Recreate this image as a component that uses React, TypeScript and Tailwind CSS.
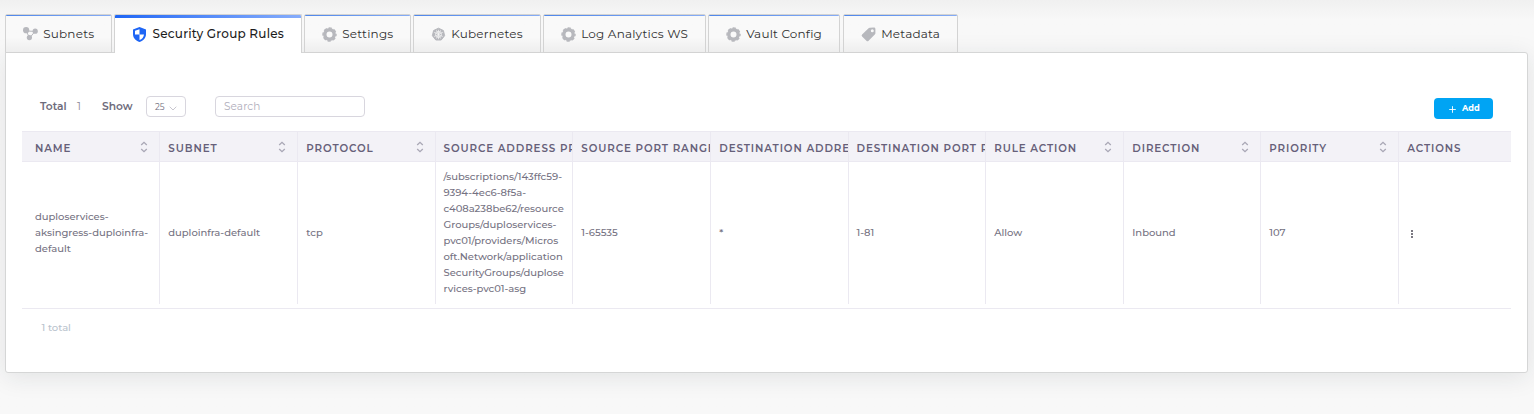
import React from "react";

type IconProps = { className?: string };

const NodesIcon = ({ className }: IconProps) => (
  <svg viewBox="0 0 15 15" className={className} fill="currentColor" stroke="currentColor">
    <path d="M3.2 4 12 4.4 6.6 11Z" fill="none" strokeWidth="1" />
    <circle cx="3.1" cy="3.2" r="3.1" stroke="none" />
    <circle cx="12.2" cy="4.200" r="2.600" stroke="none" />
    <circle cx="6.400" cy="10.600" r="2.600" stroke="none" />
  </svg>
);

const ShieldIcon = ({ className }: IconProps) => (
  <svg viewBox="0 0 15 15" className={className}>
    <path d="M7.5 0 14 2.4V7c0 3.9-2.700 6.900-6.500 8C3.700 13.900 1 10.900 1 7V2.400Z" fill="currentColor" />
    <path d="M7.500 2.200V7.400H3V3.800ZM7.500 7.400H12C11.800 10.100 10 12 7.500 12.900Z" fill="#fff" />
  </svg>
);

const GearIcon = ({ className }: IconProps) => (
  <svg viewBox="0 0 15 15" className={className} fill="none" stroke="currentColor">
    <circle cx="7.5" cy="7.500" r="4.700" strokeWidth="3.400" />
    <circle cx="7.5" cy="7.500" r="6.500" strokeWidth="1.400" strokeDasharray="3.300 1.805" strokeDashoffset="1.650" />
  </svg>
);

const KubernetesIcon = ({ className }: IconProps) => (
  <svg viewBox="0 0 15 15" className={className}>
    <path d="M7.500 1.200 12.400 3.500 13.600 8.700 10.200 13H4.800L1.400 8.700 2.600 3.500Z" fill="currentColor" stroke="currentColor" strokeLinejoin="round" />
    <g fill="none" stroke="#f7f7f7" strokeWidth=".7">
      <circle cx="7.500" cy="7.400" r="3" />
      <path d="M7.500 2.800v9.400M3.200 5.300l8.600 4.200M11.800 5.300 3.200 9.500M5.400 11.500l4.200-8.200M9.600 11.500 5.400 3.300" />
    </g>
  </svg>
);

const TagIcon = ({ className }: IconProps) => (
  <svg viewBox="0 0 15 15" className={className}>
    <path fillRule="evenodd" fill="currentColor" d="M8.700.8 13 .6Q14.400.6 14.400 2V6.200Q14.400 7 13.800 7.600L7.600 13.800Q6.500 14.800 5.400 13.800L1.100 9.500Q.1 8.400 1.100 7.400L7.300 1.400Q8 .8 8.700.8ZM11.300 2.300a1.500 1.500 0 1 0 0 3 1.500 1.500 0 0 0 0-3Z" />
  </svg>
);

const tabs = [
  { label: "Subnets", Icon: NodesIcon, width: "w-[107px]" },
  { label: "Security Group Rules", Icon: ShieldIcon, width: "w-[188px]", active: true },
  { label: "Settings", Icon: GearIcon, width: "w-[107px]" },
  { label: "Kubernetes", Icon: KubernetesIcon, width: "w-[128px]" },
  { label: "Log Analytics WS", Icon: GearIcon, width: "w-[163px]" },
  { label: "Vault Config", Icon: GearIcon, width: "w-[132px]" },
  { label: "Metadata", Icon: TagIcon, width: "w-[115px]" },
];

const columns = [
  { title: "NAME", sortable: true, lines: ["duploservices-", "aksingress-duploinfra-", "default"] },
  { title: "SUBNET", sortable: true, lines: ["duploinfra-default"] },
  { title: "PROTOCOL", sortable: true, lines: ["tcp"] },
  {
    title: "SOURCE ADDRESS PREFIX",
    lines: [
      "/subscriptions/143ffc59-",
      "9394-4ec6-8f5a-",
      "c408a238be62/resource",
      "Groups/duploservices-",
      "pvc01/providers/Micros",
      "oft.Network/application",
      "SecurityGroups/duplose",
      "rvices-pvc01-asg",
    ],
  },
  { title: "SOURCE PORT RANGE", lines: ["1-65535"] },
  { title: "DESTINATION ADDRESS PREFIX", lines: ["*"] },
  { title: "DESTINATION PORT RANGE", lines: ["1-81"] },
  { title: "RULE ACTION", sortable: true, lines: ["Allow"] },
  { title: "DIRECTION", sortable: true, lines: ["Inbound"] },
  { title: "PRIORITY", sortable: true, lines: ["107"] },
  { title: "ACTIONS", lines: [] },
];

const GRID = "grid grid-cols-[138px_138px_138px_137px_138px_138px_137px_138px_137px_138px_1fr]";

const SortIcon = () => (
  <svg viewBox="0 0 8 12" className="mb-[4px] h-3 w-2 shrink-0" fill="none" stroke="#a9a7b5" strokeWidth="1.300">
    <path d="M1.200 4 4 1.300 6.800 4M1.200 8 4 10.700 6.800 8" />
  </svg>
);

export default function App() {
  return (
    <div className="h-[414px] w-[1534px] overflow-hidden bg-[#f8f8f8] bg-linear-to-b from-[#f0f0f0] to-[#f8f8f8] to-[20px] px-[5px] pt-[14px] font-['Montserrat','Inter',sans-serif]">
      <nav className="relative z-10 -mb-px flex h-[39px]">
        {tabs.map(({ label, Icon, width, active }, i) => (
          <button
            key={label}
            className={`${width} ${i === 5 ? "mr-[3px]" : "mr-[2px]"} flex shrink-0 flex-col overflow-hidden rounded-t-[2px] border-x border-t border-[#d3d3d3] ${
              active ? "bg-white" : "border-b bg-linear-to-b from-[#f9f9f9] from-60% to-[#eeeeee]"
            }`}
          >
            <span
              className={`w-full shrink-0 bg-linear-to-r ${
                active ? "h-[3px] from-[#1f66f5] to-[#86acfb]" : "h-px from-[#4f87ea] to-[#86acf5]"
              }`}
            />
            <span className={`flex w-full items-center pl-[17px] ${active ? "h-[33px]" : "h-[36px]"}`}>
              <Icon className={`h-[15px] w-[15px] shrink-0 ${active ? "text-[#1f66f5]" : "text-[#b7b8bd]"}`} />
              <span
                className={`text-[12px] leading-4 whitespace-nowrap ${
                  active
                    ? "ml-[5.500px] pb-px font-medium tracking-[0.220px] text-[#1c1c1c]"
                    : "ml-[5.200px] tracking-[0.200px] text-[#303030]"
                }`}
              >
                {label}
              </span>
            </span>
          </button>
        ))}
      </nav>

      <main className="h-[321px] w-[1523px] rounded-b-[3px] rounded-tr-[3px] border border-[#d5d6d6] bg-white px-4 shadow-[0_4px_24px_rgba(34,41,47,0.1)]">
        <div className="flex h-[78px] items-start pt-[43px] pr-[18px] pl-[18px] text-[11px] text-[#6e6b7b]">
          <span className="mt-[3px] w-[37px] text-[10.700px] leading-4 font-semibold">Total</span>
          <span className="mt-[2px] w-[25px] leading-4 text-[#8b8895]">1</span>
          <span className="mt-[3px] w-[44px] text-[10.700px] leading-4 font-semibold">Show</span>
          <div className="flex h-[21px] w-[40px] items-center justify-between rounded-[4px] border border-[#d8d6de] pt-px pr-2 pl-2 text-[8.500px]">
            25
            <svg viewBox="0 0 8 5" className="mt-[2px] h-[5px] w-[8px]" fill="none" stroke="#c8c6cf">
              <path d="M.7.7 4 4 7.300.7" />
            </svg>
          </div>
          <input
            placeholder="Search"
            className="ml-[29px] h-[21px] w-[150px] rounded-[4px] border border-[#d8d6de] px-2 pb-px text-[10.500px] tracking-[0.100px] placeholder:text-[#b0aebb]"
          />
          <button className="mt-[2px] ml-auto flex h-[21px] w-[59px] items-center rounded-[4px] bg-[#00a4f4] pl-[15px] text-[8.200px] font-bold text-white">
            <svg viewBox="0 0 7 7" className="mt-[2px] mr-[6px] h-[7px] w-[7px]" stroke="currentColor" strokeWidth=".9">
              <path d="M3.500.2v6.600M.2 3.500h6.600" />
            </svg>
            <span className="pb-px">Add</span>
          </button>
        </div>

        <div className={`${GRID} h-[31px] border-y border-[#ebe9f1] bg-[#f3f2f7]`}>
          {columns.map(({ title, sortable }, i) => (
            <div
              key={title}
              className={`flex min-w-0 items-center justify-between overflow-hidden pt-[4px] text-[10.300px] font-semibold tracking-[0.900px] text-[#666079] ${
                i === 0 ? "pl-[13px]" : i === 3 || i === 6 ? "pl-[7.500px]" : "pl-[8.300px]"
              } ${i < 10 ? "border-r border-[#ebe9f1]" : ""} ${sortable ? "pr-[11px]" : ""}`}
            >
              <span className="leading-4 whitespace-nowrap">{title}</span>
              {sortable && <SortIcon />}
            </div>
          ))}
        </div>

        <div className={`${GRID} h-[147px] border-b border-[#ebe9f1] pb-1`}>
          {columns.map(({ title, lines }, i) => (
            <div
              key={title}
              className={`flex flex-col justify-center overflow-hidden text-[10px] leading-4 font-medium tracking-[-0.030px] text-[#757282] ${
                i === 0 ? "pl-[13px]" : i === 3 || i === 6 ? "pl-[7.500px]" : "pl-[8.300px]"
              } ${i < 10 ? "border-r border-[#ebe9f1]" : ""}`}
            >
              {lines.map((line) => (
                <span key={line} className="whitespace-nowrap">
                  {line}
                </span>
              ))}
              {i === 10 && (
                <svg viewBox="0 0 10 10" className="mt-px h-[10px] w-[10px]" fill="#5a5863">
                  <path d="M4.200 1h1.600v2H4.200zM4.200 4h1.600v2H4.200zM4.200 7h1.600v2H4.200z" />
                </svg>
              )}
            </div>
          ))}
        </div>

        <p className="pt-[11px] pl-[19.500px] text-[10px] leading-4 font-medium text-[#b9c3cd]">1 total</p>
      </main>
    </div>
  );
}
